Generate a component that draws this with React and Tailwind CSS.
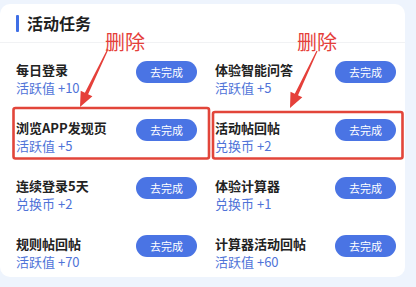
import React from "react";

const tasks = [
  ["每日登录", "活跃值 +10"],
  ["体验智能问答", "活跃值 +5"],
  ["浏览APP发现页", "活跃值 +5"],
  ["活动帖回帖", "兑换币 +2"],
  ["连续登录5天", "兑换币 +2"],
  ["体验计算器", "兑换币 +1"],
  ["规则帖回帖", "活跃值 +70"],
  ["计算器活动回帖", "活跃值 +60"],
];

function arrow(tail, tip) {
  const dx = tip[0] - tail[0];
  const dy = tip[1] - tail[1];
  const len = Math.hypot(dx, dy);
  const u = [dx / len, dy / len];
  const p = [-u[1], u[0]];
  const hl = 15;
  const hw = 6.5;
  const base = [tip[0] - u[0] * hl, tip[1] - u[1] * hl];
  const pt = (c, k) => `${(c[0] + p[0] * k).toFixed(1)},${(c[1] + p[1] * k).toFixed(1)}`;
  return [
    pt(tail, 0.6),
    pt(base, 1.8),
    pt(base, hw),
    `${tip[0]},${tip[1]}`,
    pt(base, -hw),
    pt(base, -1.8),
    pt(tail, -0.6),
  ].join(" ");
}

export default function App() {
  return (
    <div
      className="relative w-[416px] h-[287px] bg-[#eef4fd] overflow-hidden"
      style={{ fontFamily: '"Noto Sans CJK SC", "Noto Sans", sans-serif' }}
    >
      <div className="absolute left-0 top-0 w-full h-full">
        <div className="mt-[4px] w-[405px] h-[273px] bg-white rounded-[10px]">
          <div className="h-[39px] flex items-center pl-[16px] border-b border-[#f1f2f4]">
            <div className="w-[3px] h-[17px] bg-[#3f6fe6] rounded-[1px]" />
            <div className="ml-[8px] text-[16px] font-bold text-[#1f1f1f] leading-none">活动任务</div>
          </div>
          <div className="grid grid-cols-[181px_181px] gap-x-[18px] gap-y-[8px] pl-[16px] pt-[11px]">
            {tasks.map(([t, s], i) => (
              <div key={i} className="h-[50px] flex items-center justify-between">
                <div className="flex flex-col">
                  <div className="text-[13px] leading-[18px] font-bold text-[#222]">{t}</div>
                  <div className="text-[13px] leading-[18px] text-[#4f73d8]">{s}</div>
                </div>
                <div className="self-center -mt-[14px] w-[61px] h-[22px] rounded-full bg-[#4a74e4] text-white text-[11px] flex items-center justify-center">
                  去完成
                </div>
              </div>
            ))}
          </div>
        </div>
      </div>
      <div className="absolute left-[105px] top-[30px] text-[20px] leading-[24px] text-[#e5403a]">删除</div>
      <div className="absolute left-[297px] top-[30px] text-[20px] leading-[24px] text-[#e5403a]">删除</div>
      <svg className="absolute left-0 top-0" width="416" height="287" viewBox="0 0 416 287">
        <rect x="13.5" y="108" width="195.5" height="50.5" rx="2" fill="none" stroke="#e2453a" strokeWidth="2.6" />
        <rect x="213" y="112" width="189.5" height="46.5" rx="2" fill="none" stroke="#e2453a" strokeWidth="2.6" />
        <polygon points={arrow([108, 49], [80, 107])} fill="#e5403a" />
        <polygon points={arrow([317, 51], [290, 108])} fill="#e5403a" />
      </svg>
    </div>
  );
}
